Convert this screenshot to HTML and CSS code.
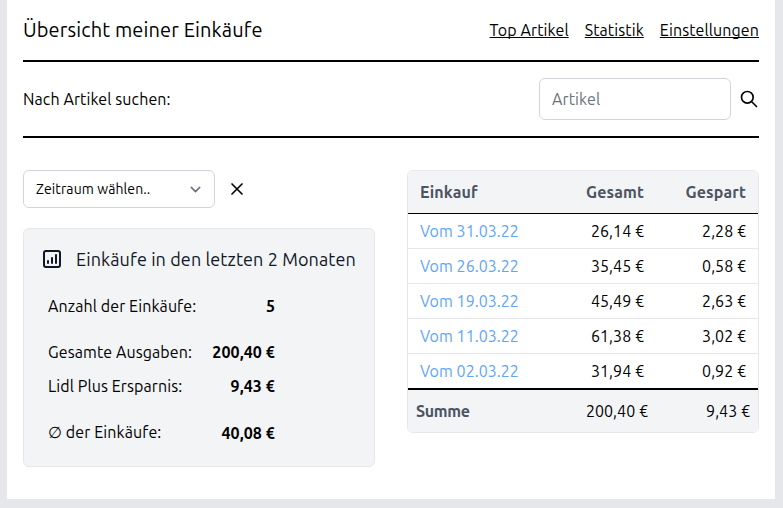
FILE: index.html
```html
<!DOCTYPE html>
<html lang="de">
<head>
<meta charset="utf-8">
<title>Übersicht meiner Einkäufe</title>
<link rel="stylesheet" href="styles.css">
</head>
<body>
<main class="page">
  <header class="header">
    <h1 class="title">Übersicht meiner Einkäufe</h1>
    <nav class="nav">
      <a href="#">Top Artikel</a>
      <a href="#">Statistik</a>
      <a href="#">Einstellungen</a>
    </nav>
  </header>
  <form class="search">
    <label class="search-label" for="article">Nach Artikel suchen:</label>
    <input class="search-input" id="article" type="text" placeholder="Artikel">
    <svg class="icon" viewBox="0 0 24 24"><path d="M21 21l-6-6m2-5a7 7 0 11-14 0 7 7 0 0114 0z"/></svg>
  </form>
  <div class="columns">
    <section class="summary">
      <div class="filter">
        <div class="select">
          <span>Zeitraum wählen..</span>
          <svg class="chevron" viewBox="0 0 20 20"><path d="M6 8l4 4 4-4"/></svg>
        </div>
        <svg class="icon" viewBox="0 0 24 24"><path d="M6 18L18 6M6 6l12 12"/></svg>
      </div>
      <div class="card">
        <h2 class="card-title">
          <svg class="chart" viewBox="0 0 24 24"><path d="M16 8v8m-4-5v5m-4-2v2m-2 4h12a2 2 0 002-2V6a2 2 0 00-2-2H6a2 2 0 00-2 2v12a2 2 0 002 2z"/></svg>
          <span>Einkäufe in den letzten 2 Monaten</span>
        </h2>
        <dl class="stats">
          <dt>Anzahl der Einkäufe:</dt><dd>5</dd>
          <dt class="spaced">Gesamte Ausgaben:</dt><dd class="spaced">200,40 €</dd>
          <dt>Lidl Plus Ersparnis:</dt><dd>9,43 €</dd>
          <dt class="spaced">∅ der Einkäufe:</dt><dd class="spaced average">40,08 €</dd>
        </dl>
      </div>
    </section>
    <section class="purchases">
      <div class="row head"><span>Einkauf</span><span>Gesamt</span><span>Gespart</span></div>
      <div class="row"><a href="#">Vom 31.03.22</a><span>26,14 €</span><span>2,28 €</span></div>
      <div class="row"><a href="#">Vom 26.03.22</a><span>35,45 €</span><span>0,58 €</span></div>
      <div class="row"><a href="#">Vom 19.03.22</a><span>45,49 €</span><span>2,63 €</span></div>
      <div class="row"><a href="#">Vom 11.03.22</a><span>61,38 €</span><span>3,02 €</span></div>
      <div class="row"><a href="#">Vom 02.03.22</a><span>31,94 €</span><span>0,92 €</span></div>
      <div class="row foot"><span class="sum">Summe</span><span>200,40 €</span><span>9,43 €</span></div>
    </section>
  </div>
</main>
</body>
</html>
```
FILE: styles.css
```css
* { box-sizing: border-box; }

body {
  margin: 0;
  padding: 0 8px 0 7px;
  height: 508px;
  overflow: hidden;
  background: #e5e7eb;
  color: #000;
  font: 16px/24px Ubuntu, "Noto Sans", sans-serif;
  letter-spacing: 0.1px;
}

h1, h2, dl, dd { margin: 0; font-weight: 400; }
svg { flex: none; fill: none; stroke: currentColor; stroke-linecap: round; stroke-linejoin: round; }

.page { height: 499px; padding: 0 16px; background: #fff; }

.header {
  display: flex;
  align-items: center;
  justify-content: space-between;
  height: 62px;
  border-bottom: 2px solid #000;
}
.title { font-size: 20px; line-height: 28px; letter-spacing: 0.13px; }
.nav { display: flex; gap: 16px; }
.nav a { color: #000; text-decoration-skip-ink: none; }

.search {
  display: flex;
  align-items: center;
  height: 76px;
  border-bottom: 2px solid #000;
}
.search-label { flex: 1; }
.search-input {
  width: 192px;
  height: 42px;
  margin-right: 8px;
  padding: 8px 12px;
  border: 1px solid #d1d5db;
  border-radius: 6px;
  font: inherit;
  letter-spacing: inherit;
}
.search-input::placeholder { color: #6b7280; opacity: 1; }

.icon { width: 20px; height: 20px; stroke-width: 2; }

.columns { display: grid; grid-template-columns: 352px 352px; gap: 32px; padding-top: 32px; align-items: start; }

.filter { display: flex; align-items: center; gap: 12px; margin-bottom: 20px; }
.select {
  display: flex;
  align-items: center;
  justify-content: space-between;
  width: 192px;
  height: 38px;
  padding: 0 8px 0 12px;
  border: 1px solid #d1d5db;
  border-radius: 6px;
  font-size: 14px;
}
.chevron { width: 21px; height: 21px; stroke: #6b7280; stroke-width: 1.5; }

.card {
  height: 239px;
  padding: 16px;
  border: 1px solid #e5e7eb;
  border-radius: 6px;
  background: #f3f4f6;
}
.card-title {
  display: flex;
  align-items: center;
  gap: 12px;
  height: 28px;
  color: #111827;
  font-size: 18px;
  line-height: 28px;
  white-space: nowrap;
}
.chart { width: 24px; height: 24px; stroke-width: 2; }

.stats {
  display: grid;
  grid-template-columns: 149px 78px;
  row-gap: 10px;
  padding: 21px 0 0 8px;
}
.stats dt { white-space: nowrap; }
.stats dd { text-align: right; font-weight: 700; }
.stats .spaced { margin-top: 12px; }
.stats .average { padding-top: 1px; }

.purchases {
  border: 1px solid #e5e7eb;
  border-radius: 6px;
  overflow: hidden;
}
.row {
  display: grid;
  grid-template-columns: 146px 102px 102px;
  height: 35px;
  line-height: 34px;
  border-bottom: 1px solid #e5e7eb;
  letter-spacing: 0.04px;
}
.row > * { padding: 0 12px; text-align: right; }
.row > :first-child { text-align: left; }
.row a { color: #60a5fa; text-decoration: none; }
.head {
  height: 43px;
  line-height: 42px;
  border-color: #000;
  background: #f3f4f6;
  color: #4b5563;
  font-weight: 600;
  letter-spacing: 0.12px;
}
.foot {
  height: 44px;
  line-height: 42px;
  margin-top: -1px;
  border-top: 2px solid #000;
  border-bottom: 0;
  background: #f3f4f6;
}
.foot > * { padding: 0 8px; }
.foot .sum { color: #4b5563; font-weight: 600; letter-spacing: -0.3px; }
```
